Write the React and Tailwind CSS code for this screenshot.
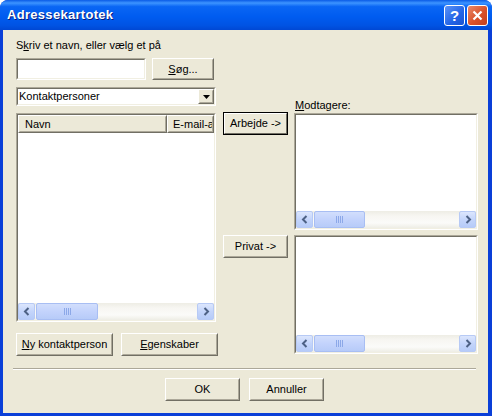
import React from 'react';

const font = { fontFamily: '"Liberation Sans", Arial, sans-serif' };

function Sunken({ className = '', children }) {
  return (
    <div className={`border border-t-[#ACA899] border-l-[#ACA899] border-b-white border-r-white ${className}`}>
      <div className="w-full h-full border border-t-[#716F64] border-l-[#716F64] border-b-[#F1EFE2] border-r-[#F1EFE2] bg-white flex flex-col overflow-hidden">
        {children}
      </div>
    </div>
  );
}

function Btn({ className = '', def = false, children }) {
  const outer = def
    ? 'border border-black'
    : 'border border-t-white border-l-white border-b-[#716F64] border-r-[#716F64]';
  const inner = def
    ? 'border border-t-white border-l-white border-b-[#716F64] border-r-[#716F64]'
    : 'border border-t-[#ECE9D8] border-l-[#ECE9D8] border-b-[#ACA899] border-r-[#ACA899]';
  return (
    <div className={`${outer} bg-[#ECE9D8] ${className}`}>
      <div className={`${inner} w-full h-full flex items-center justify-center text-[11px] text-black overflow-hidden`}>
        {children}
      </div>
    </div>
  );
}

function Arrow({ dir }) {
  return (
    <div className="w-[17px] h-[17px] rounded-[2px] border border-[#B7CAF5] bg-[linear-gradient(to_bottom,#DCE6FD,#C4D5FB_50%,#B6CBF8)] flex items-center justify-center shrink-0">
      <svg width="8" height="9" viewBox="0 0 8 9">
        {dir === 'left' ? (
          <path d="M5.5 1 L2 4.5 L5.5 8" stroke="#4D6185" strokeWidth="2" fill="none" />
        ) : (
          <path d="M2.5 1 L6 4.5 L2.5 8" stroke="#4D6185" strokeWidth="2" fill="none" />
        )}
      </svg>
    </div>
  );
}

function HScroll({ thumb }) {
  return (
    <div className="h-[17px] flex bg-[linear-gradient(to_bottom,#EEEDE5,#F7F6F2_30%,#FBFBF9_70%,#EEEDE5)] shrink-0">
      <Arrow dir="left" />
      <div
        className="ml-[1px] h-[17px] rounded-[2px] border border-[#A8BEF3] bg-[linear-gradient(to_bottom,#D2DEFC,#C3D3FC_50%,#B7CBF8)] flex items-center justify-center gap-[1px]"
        style={{ width: thumb }}
      >
        {[0, 1, 2, 3].map((i) => (
          <div key={i} className="w-[1px] h-[7px] bg-[#EEF3FE] border-r border-[#8CA8E8]" />
        ))}
      </div>
      <div className="flex-1" />
      <Arrow dir="right" />
    </div>
  );
}

export default function App() {
  return (
    <div className="w-[492px] h-[416px] overflow-hidden" style={font}>
      <div className="w-full h-full flex flex-col rounded-t-[8px] bg-[#0A3FD8]">
        {/* title bar */}
        <div className="h-[30px] shrink-0 flex items-center pl-[7px] pr-[4px] rounded-t-[8px] bg-[linear-gradient(to_bottom,#0A5BE6,#3D94FF_10%,#0A66F4_22%,#005CF0_55%,#0053E3_85%,#0048D4)]">
          <span className="text-white font-bold text-[13px] [text-shadow:1px_1px_0_#0A1C7A] tracking-[0.3px]">
            Adressekartotek
          </span>
          <div className="flex-1" />
          <div className="w-[21px] h-[21px] rounded-[3px] border border-white bg-[linear-gradient(135deg,#5C93F7,#2264E6_60%,#1A52D0)] flex items-center justify-center text-white font-bold text-[15px] leading-none">
            ?
          </div>
          <div className="ml-[2px] w-[21px] h-[21px] rounded-[3px] border border-white bg-[linear-gradient(135deg,#E88A6B,#D9512A_55%,#C2401E)] flex items-center justify-center">
            <svg width="11" height="11" viewBox="0 0 11 11">
              <path d="M1.5 1.5 L9.5 9.5 M9.5 1.5 L1.5 9.5" stroke="white" strokeWidth="2.2" />
            </svg>
          </div>
        </div>

        {/* client */}
        <div className="flex-1 mx-[3px] mb-[3px] mr-[4px] bg-[#ECE9D8] flex flex-col text-[11px] text-black">
          <div className="flex pl-[13px] mt-[9px]">
            {/* left column */}
            <div className="w-[202px] flex flex-col">
              <div className="h-[13px] leading-[13px]">
                S<span className="underline">k</span>riv et navn, eller vælg et på
              </div>
              <div className="flex mt-[6px]">
                <Sunken className="w-[130px] h-[22px]" />
                <Btn className="ml-[6px] w-[62px] h-[22px]">
                  <span><span className="underline">S</span>øg...</span>
                </Btn>
              </div>
              <div className="mt-[7px] w-[200px] h-[19px] border border-t-[#ACA899] border-l-[#ACA899] border-b-white border-r-white">
                <div className="w-full h-full border border-t-[#716F64] border-l-[#716F64] border-b-[#F1EFE2] border-r-[#F1EFE2] bg-white flex items-center">
                  <span className="pl-[1px] flex-1">Kontaktpersoner</span>
                  <Btn className="w-[16px] h-[15px]">
                    <svg width="7" height="4" viewBox="0 0 7 4"><path d="M0 0 H7 L3.5 4 Z" fill="black" /></svg>
                  </Btn>
                </div>
              </div>
              <Sunken className="mt-[7px] w-[200px] h-[209px]">
                <div className="flex h-[18px] shrink-0">
                  <Btn className="w-[149px] shrink-0 h-[18px]">
                    <span className="w-full pl-[5px] text-left">Navn</span>
                  </Btn>
                  <Btn className="flex-1 min-w-0 h-[18px]">
                    <span className="w-full pl-[4px] text-left whitespace-nowrap">E-mail-adresse</span>
                  </Btn>
                </div>
                <div className="flex-1" />
                <HScroll thumb={62} />
              </Sunken>
              <div className="flex mt-[11px]">
                <Btn className="w-[97px] h-[23px]">
                  <span><span className="underline">N</span>y kontaktperson</span>
                </Btn>
                <Btn className="ml-[8px] w-[97px] h-[23px]">
                  <span><span className="underline">E</span>genskaber</span>
                </Btn>
              </div>
            </div>

            {/* middle column */}
            <div className="ml-[5px] w-[65px] flex flex-col">
              <Btn def className="mt-[73px] w-[65px] h-[23px]">Arbejde -&gt;</Btn>
              <Btn className="mt-[100px] w-[65px] h-[23px]">Privat -&gt;</Btn>
            </div>

            {/* right column */}
            <div className="ml-[6px] w-[184px] flex flex-col">
              <div className="mt-[60px] h-[13px] leading-[13px] pl-[1px]">
                <span className="underline">M</span>odtagere:
              </div>
              <Sunken className="mt-[1px] w-[184px] h-[117px]">
                <div className="flex-1" />
                <HScroll thumb={51} />
              </Sunken>
              <Sunken className="mt-[5px] w-[184px] h-[119px]">
                <div className="flex-1" />
                <HScroll thumb={51} />
              </Sunken>
            </div>
          </div>

          {/* separator */}
          <div className="mt-[12px] ml-[10px] w-[463px] h-[2px] border-t border-[#ACA899] border-b border-b-white" />

          <div className="flex mt-[8px] ml-[162px]">
            <Btn className="w-[75px] h-[23px]">OK</Btn>
            <Btn className="ml-[9px] w-[75px] h-[23px]">Annuller</Btn>
          </div>
        </div>
      </div>
    </div>
  );
}
